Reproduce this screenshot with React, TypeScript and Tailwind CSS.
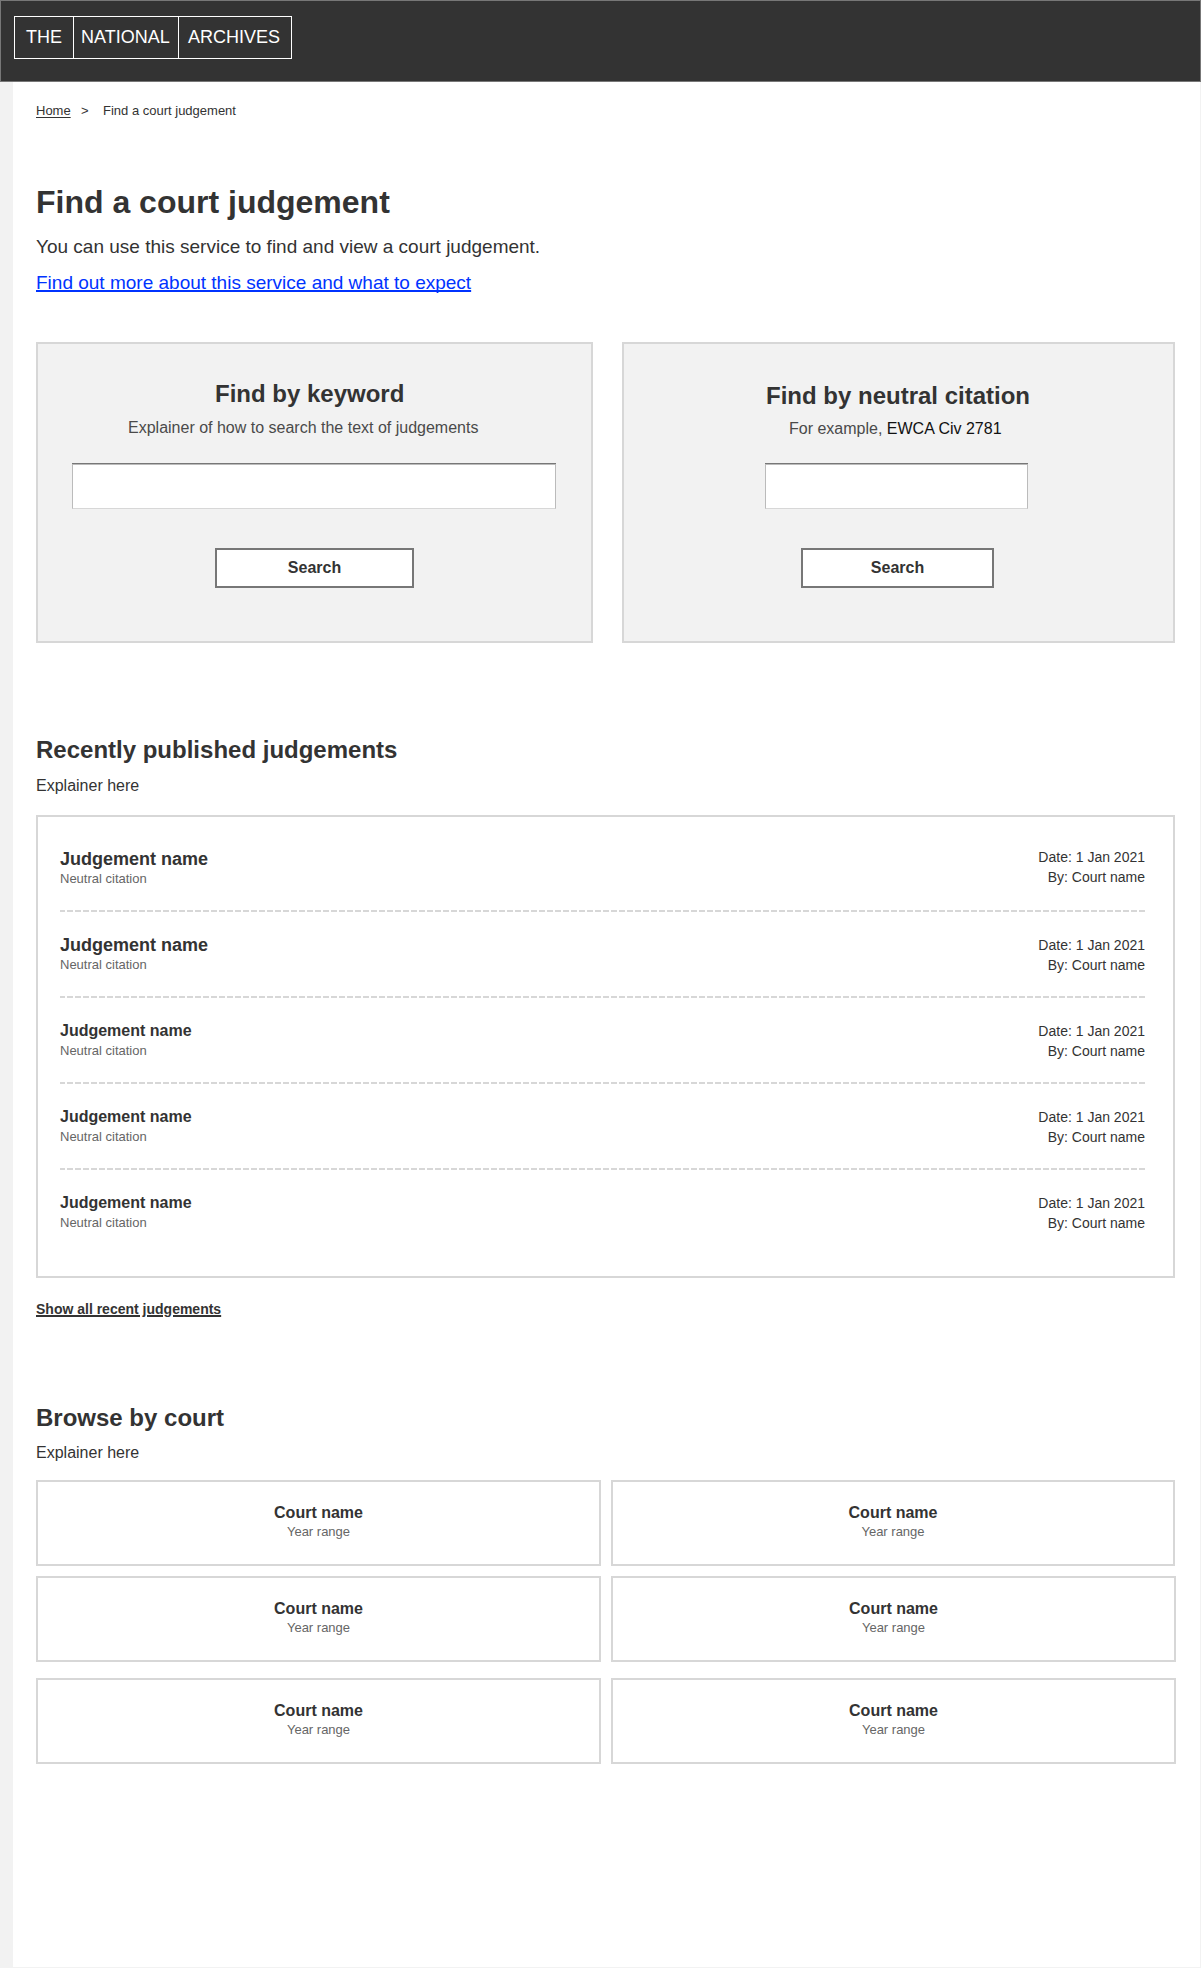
const RULE =
  "h-0.5 w-[1085px] bg-[repeating-linear-gradient(90deg,#d7d7d7_0px,#d7d7d7_5px,#ffffff_5px,#ffffff_7px,#d7d7d7_7px,#d7d7d7_8px)]";

const judgements = [
  { name: "text-[18px] mb-px", meta: "-mt-px" },
  { name: "text-[18px] mb-px", meta: "pt-px" },
  { name: "text-base mb-px", meta: "pt-px" },
  { name: "text-base mb-px", meta: "pt-px" },
  { name: "text-base mb-px", meta: "pt-px" },
];

function Header() {
  return (
    <header className="h-[82px] border border-[#777777] bg-[#333333] pl-[13px] pt-[15px]">
      <div className="flex h-[43px] w-[278px] border border-white text-[18px] text-white">
        <span className="w-[59px] border-r border-white pl-[11px] leading-[41px]">THE</span>
        <span className="w-[105px] border-r border-white pl-[7px] leading-[41px]">NATIONAL</span>
        <span className="pl-[9px] leading-[41px]">ARCHIVES</span>
      </div>
    </header>
  );
}

function Field({ className }: { className: string }) {
  return (
    <div className={className}>
      <div className="h-px bg-[#777777]" />
      <input
        aria-label="Search text"
        className="block h-[45px] w-full border border-[#bbbbbb] border-b-[#d7d7d7] bg-white outline-none"
      />
    </div>
  );
}

function SearchButton({ className }: { className: string }) {
  return (
    <button
      className={`block h-10 border-2 border-[#777777] bg-white text-center text-base font-bold ${className}`}
    >
      Search
    </button>
  );
}

function Court({ className }: { className: string }) {
  return (
    <div className={`h-[86px] border-2 border-[#d7d7d7] pt-[21px] text-center ${className}`}>
      <h3 className="text-base font-bold leading-5">Court name</h3>
      <p className="pt-px text-[13px] leading-4 text-[#666666]">Year range</p>
    </div>
  );
}

export default function App() {
  return (
    <div className="h-[1968px] w-[1201px] overflow-hidden bg-[#f2f2f2] font-['Liberation_Sans',Arial,sans-serif] text-[#333333]">
      <Header />
      <main className="ml-[13px] mr-px h-[1885px] bg-white pl-[23px] pt-[21px]">
        <nav className="flex h-4 text-[13px] leading-4">
          <a className="w-[45px] underline underline-offset-2">Home</a>
          <span className="w-[22px]">&gt;</span>
          <span>Find a court judgement</span>
        </nav>

        <h1 className="mt-[63px] text-[32px] font-bold leading-10">Find a court judgement</h1>
        <p className="mt-[13px] text-[19px] leading-6">
          You can use this service to find and view a court judgement.
        </p>
        <p className="mt-3 text-[19px] leading-6">
          <a className="text-[#0033ff] underline decoration-2 underline-offset-1 [text-decoration-skip-ink:none]">
            Find out more about this service and what to expect
          </a>
        </p>

        <div className="mt-[47px] flex gap-[29px]">
          <section className="h-[301px] w-[557px] border-2 border-[#d7d7d7] bg-[#f2f2f2] pt-[35px]">
            <h2 className="pl-[177px] text-2xl font-bold leading-[30px]">Find by keyword</h2>
            <p className="mt-[9px] pl-[90px] text-base leading-5 text-[#4a4a4a]">
              Explainer of how to search the text of judgements
            </p>
            <Field className="ml-[34px] mt-[25px] w-[484px]" />
            <SearchButton className="ml-[177px] mt-[39px] w-[199px]" />
          </section>
          <section className="h-[301px] w-[553px] border-2 border-[#d7d7d7] bg-[#f2f2f2] pt-[37px]">
            <h2 className="pl-[142px] text-2xl font-bold leading-[30px]">Find by neutral citation</h2>
            <p className="mt-2 pl-[165px] text-base leading-5 text-[#4a4a4a]">
              For example, <span className="text-[#111111]">EWCA Civ 2781</span>
            </p>
            <Field className="ml-[141px] mt-6 w-[263px]" />
            <SearchButton className="ml-[177px] mt-[39px] w-[193px]" />
          </section>
        </div>

        <h2 className="mt-[92px] text-2xl font-bold leading-[30px]">Recently published judgements</h2>
        <p className="mt-[11px] text-base leading-5">Explainer here</p>
        <ul className="mt-[19px] h-[463px] w-[1139px] border-2 border-[#d7d7d7] pl-[22px] pt-[31px]">
          {judgements.map((row, i) => (
            <li key={i} className="h-[86px] w-[1085px]">
              <div className="flex h-[62px] justify-between">
                <div>
                  <h3 className={`font-bold leading-[22px] ${row.name}`}>Judgement name</h3>
                  <p className="text-[13px] leading-4 text-[#666666]">Neutral citation</p>
                </div>
                <div className={`text-right text-sm leading-5 ${row.meta}`}>
                  <p>Date: 1 Jan 2021</p>
                  <p>By: Court name</p>
                </div>
              </div>
              {i < judgements.length - 1 && <div className={RULE} />}
            </li>
          ))}
        </ul>
        <p className="mt-[21px] text-sm font-bold leading-5">
          <a className="underline decoration-2 underline-offset-1">Show all recent judgements</a>
        </p>

        <h2 className="mt-[84px] text-2xl font-bold leading-[30px]">Browse by court</h2>
        <p className="mt-[10px] text-base leading-5">Explainer here</p>
        <div className="mt-[17px] flex gap-2.5">
          <Court className="w-[565px]" />
          <Court className="w-[564px]" />
        </div>
        <div className="mt-2.5 flex gap-2.5">
          <Court className="w-[565px]" />
          <Court className="w-[565px]" />
        </div>
        <div className="mt-4 flex gap-2.5">
          <Court className="w-[565px]" />
          <Court className="w-[565px]" />
        </div>
      </main>
    </div>
  );
}
